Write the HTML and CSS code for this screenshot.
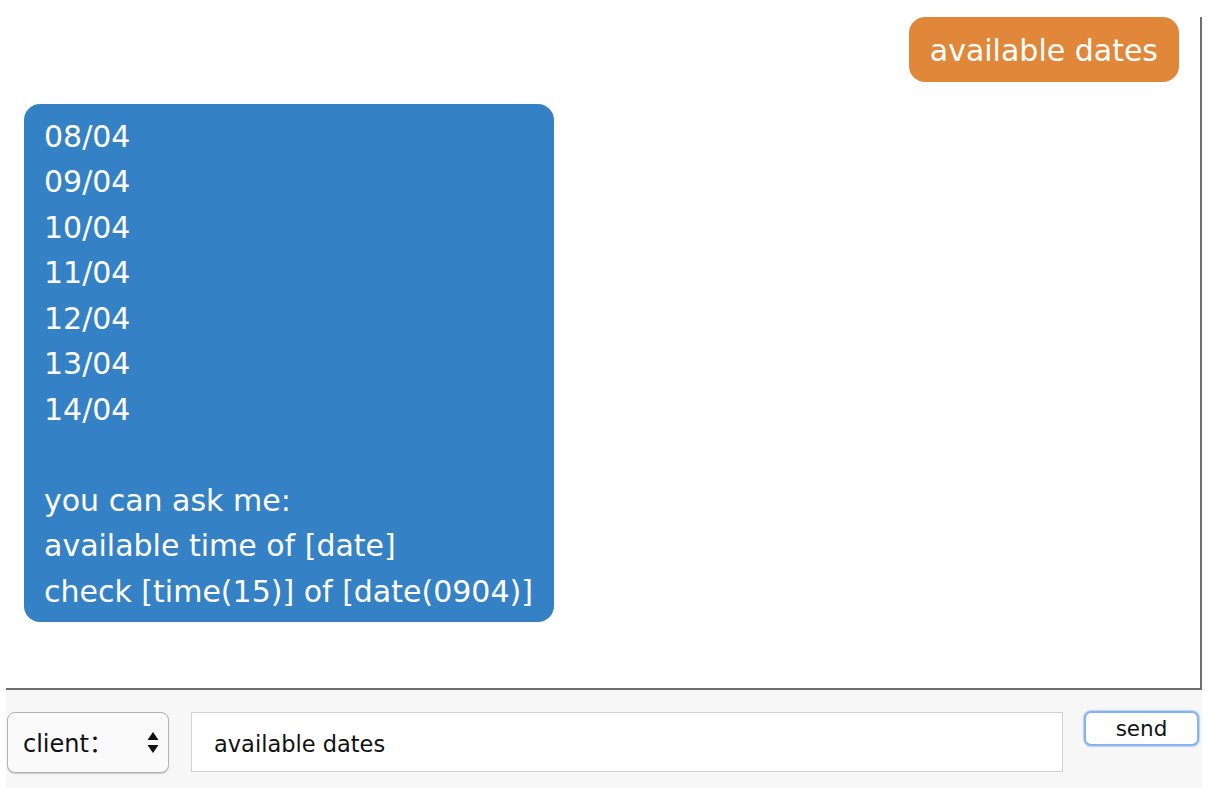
FILE: index.html
```html
<!DOCTYPE html>
<html lang="en">
<head>
<meta charset="utf-8">
<title>Chat</title>
<link rel="stylesheet" href="styles.css">
</head>
<body>
<div class="app">
  <div class="chat">
    <div class="bubble me">available dates</div>
    <div class="bubble bot">08/04
09/04
10/04
11/04
12/04
13/04
14/04

you can ask me:
available time of [date]
check [time(15)] of [date(0904)]</div>
  </div>
  <div class="composer">
    <div class="select">
      <span class="select-text">client：</span>
      <svg class="select-arrows" width="12" height="22" viewBox="0 0 12 22" aria-hidden="true">
        <path d="M6 0 L11.5 8 L0.5 8 Z" fill="#111"/>
        <path d="M0.5 13 L11.5 13 L6 21 Z" fill="#111"/>
      </svg>
    </div>
    <div class="input">available dates</div>
    <button class="send" type="button">send</button>
  </div>
</div>
</body>
</html>
```
FILE: styles.css
```css
html, body {
  margin: 0;
  padding: 0;
  background: #ffffff;
}

body {
  font-family: "DejaVu Sans", "Noto Sans CJK SC", sans-serif;
  width: 1208px;
  height: 788px;
  overflow: hidden;
}

.app {
  padding-left: 6px;
  width: 1196px;
  display: flex;
  flex-direction: column;
}

.chat {
  margin-top: 17px;
  height: 671px;
  border-right: 2px solid #6e6e6e;
  border-bottom: 2px solid #6e6e6e;
  display: flex;
  flex-direction: column;
  gap: 22px;
  padding: 0 21px 0 18px;
}

.bubble {
  color: #ffffff;
  font-size: 30px;
  line-height: 45.5px;
  border-radius: 16px;
}

.bubble.me {
  align-self: flex-end;
  background: #e1873a;
  padding: 11px 21px 8.5px;
}

.bubble.bot {
  align-self: flex-start;
  background: #3581c6;
  padding: 9.5px 21px 8px 20px;
  white-space: pre-line;
}

.composer {
  background: #f7f7f7;
  height: 98px;
  display: flex;
  align-items: flex-start;
  padding-left: 1px;
}

.select {
  margin-top: 22px;
  width: 160px;
  height: 59px;
  box-sizing: content-box;
  border: 1px solid #b3b3b3;
  border-radius: 8px;
  background: #fafafa;
  box-shadow: 0 1px 1px rgba(0, 0, 0, 0.18);
  display: flex;
  align-items: center;
  justify-content: space-between;
  padding: 0;
}

.select-text {
  padding-left: 15px;
  padding-bottom: 3px;
  font-size: 24px;
  color: #111111;
}

.select-arrows {
  margin-right: 9px;
}

.input {
  margin-top: 22px;
  margin-left: 22px;
  width: 848px;
  height: 58px;
  box-sizing: content-box;
  border: 1px solid #d0d0d0;
  background: #ffffff;
  padding-left: 22px;
  padding-top: 3px;
  margin-bottom: 0;
  display: flex;
  align-items: center;
  font-size: 22.5px;
  color: #111111;
}

.input {
  height: 55px;
}

.send {
  margin-top: 21px;
  margin-left: 21px;
  width: 115px;
  height: 35px;
  box-sizing: border-box;
  background: #ffffff;
  border: 2px solid #86b2ee;
  box-shadow: 0 0 1px 1px #b9d3f6;
  border-radius: 7px;
  font-family: "DejaVu Sans", sans-serif;
  font-size: 21.5px;
  line-height: 1;
  color: #111111;
  padding: 1px 0 0 0;
}
```
